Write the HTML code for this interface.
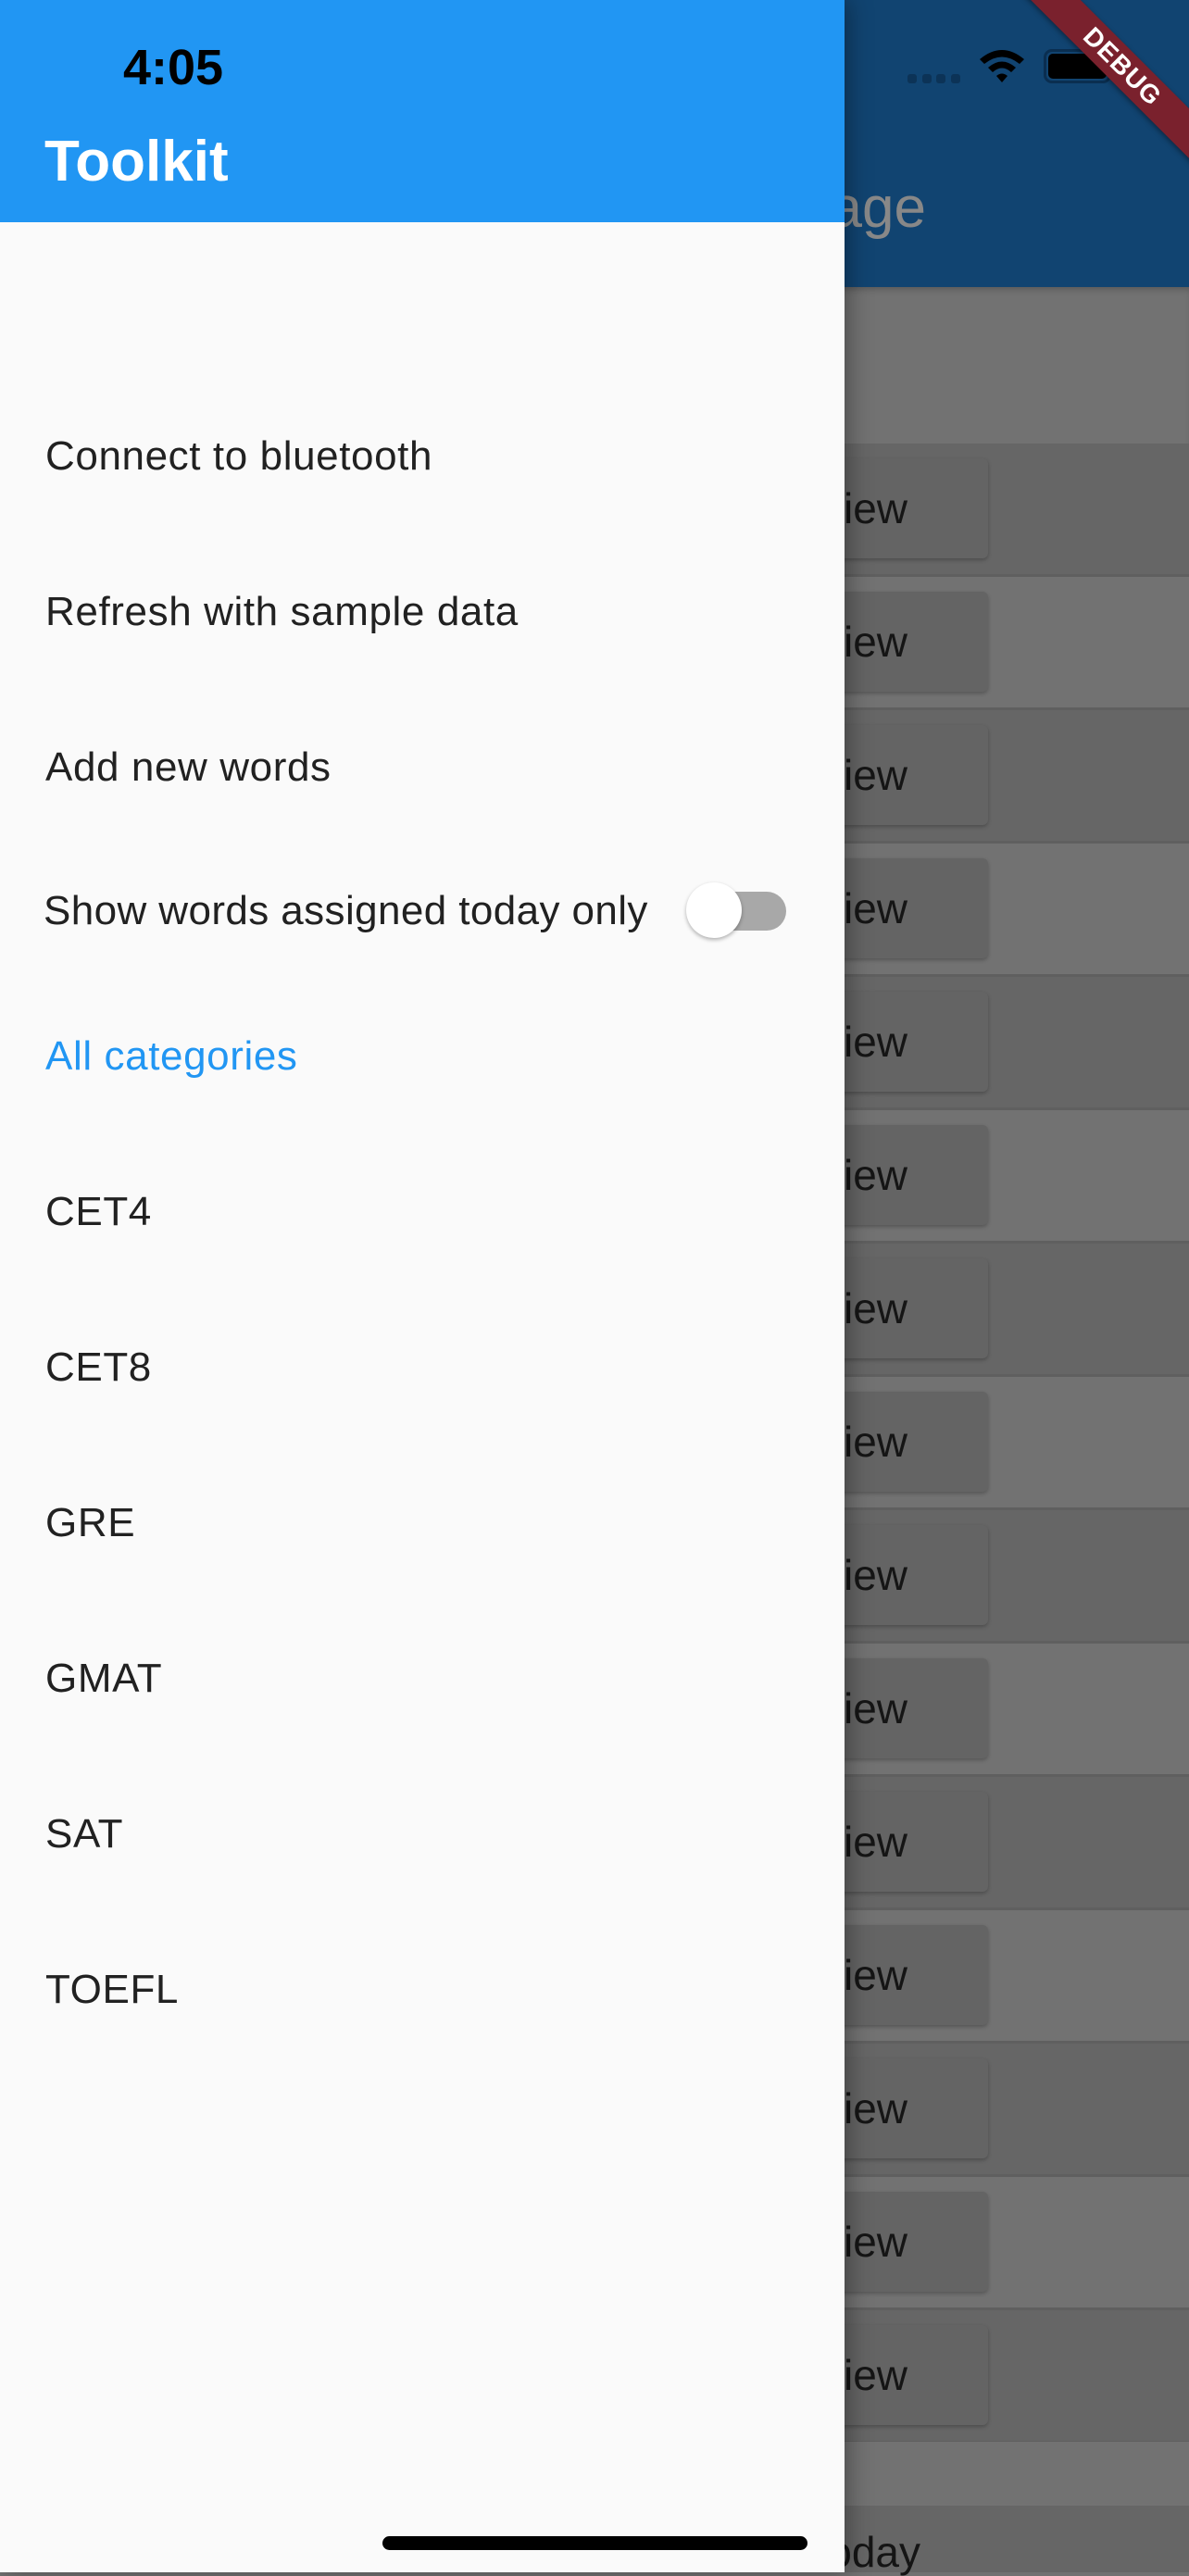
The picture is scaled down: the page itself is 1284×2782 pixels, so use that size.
<!DOCTYPE html>
<html><head><meta charset="utf-8"><style>
*{margin:0;padding:0;box-sizing:border-box}
body{width:1284px;height:2778px;overflow:hidden;position:relative;background:#727272;font-family:"Liberation Sans",sans-serif}
.a{position:absolute;white-space:nowrap}
.row{position:absolute;left:0;width:1284px;height:144px;border-bottom:3px solid #5f5f5f}
.btn{position:absolute;left:860px;width:207px;top:16px;height:108px;background:#646464;border-radius:6px;box-shadow:0 2px 4px rgba(0,0,0,.25)}
.iew{position:absolute;right:304px;top:43px;font-size:46px;color:#151515;line-height:1.2}
.mi{position:absolute;left:49px;font-size:44px;color:#212121;line-height:1;letter-spacing:.6px}
</style></head><body>
<div class="a" style="left:0;top:0;width:1284px;height:310px;background:#114471"></div>
<div class="a" style="left:0;top:310px;width:1284px;height:169px;background:#727272;box-shadow:inset 0 6px 8px -4px rgba(0,0,0,.25)"></div>
<div class="a" style="right:284px;top:194px;font-size:62px;color:#888;line-height:1">Home page</div>

<div class="row" style="top:479px;background:#666"><div class="btn"></div><div class="iew">Review</div></div>
<div class="row" style="top:623px;background:#727272"><div class="btn"></div><div class="iew">Review</div></div>
<div class="row" style="top:767px;background:#666"><div class="btn"></div><div class="iew">Review</div></div>
<div class="row" style="top:911px;background:#727272"><div class="btn"></div><div class="iew">Review</div></div>
<div class="row" style="top:1055px;background:#666"><div class="btn"></div><div class="iew">Review</div></div>
<div class="row" style="top:1199px;background:#727272"><div class="btn"></div><div class="iew">Review</div></div>
<div class="row" style="top:1343px;background:#666"><div class="btn"></div><div class="iew">Review</div></div>
<div class="row" style="top:1487px;background:#727272"><div class="btn"></div><div class="iew">Review</div></div>
<div class="row" style="top:1631px;background:#666"><div class="btn"></div><div class="iew">Review</div></div>
<div class="row" style="top:1775px;background:#727272"><div class="btn"></div><div class="iew">Review</div></div>
<div class="row" style="top:1919px;background:#666"><div class="btn"></div><div class="iew">Review</div></div>
<div class="row" style="top:2063px;background:#727272"><div class="btn"></div><div class="iew">Review</div></div>
<div class="row" style="top:2207px;background:#666"><div class="btn"></div><div class="iew">Review</div></div>
<div class="row" style="top:2351px;background:#727272"><div class="btn"></div><div class="iew">Review</div></div>
<div class="row" style="top:2495px;background:#666"><div class="btn"></div><div class="iew">Review</div></div>
<div class="a" style="left:0;top:2637px;width:1284px;height:69px;background:#727272"></div>
<div class="a" style="left:0;top:2706px;width:1284px;height:72px;background:#666"></div>
<div class="a" style="right:290px;top:2733px;font-size:46px;color:#151515;line-height:1">Words today</div>

<div class="a" style="left:980px;top:80px;width:10px;height:10px;border-radius:3px;background:#0c3357"></div>
<div class="a" style="left:996px;top:80px;width:10px;height:10px;border-radius:3px;background:#0c3357"></div>
<div class="a" style="left:1011px;top:80px;width:10px;height:10px;border-radius:3px;background:#0c3357"></div>
<div class="a" style="left:1027px;top:80px;width:10px;height:10px;border-radius:3px;background:#0c3357"></div>
<svg class="a" style="left:1056px;top:52px" width="52" height="40" viewBox="0 0 52 40">
<path d="M2 12 Q26 -8 50 12 L45 17 Q26 2 7 17Z" fill="#000"/>
<path d="M11 21 Q26 8 41 21 L36 26 Q26 17 16 26Z" fill="#000"/>
<path d="M20 30 Q26 25 32 30 L26 37Z" fill="#000"/>
</svg>
<div class="a" style="left:1127px;top:53px;width:73px;height:37px;border:3px solid #0a2e50;border-radius:9px"></div>
<div class="a" style="left:1132px;top:58px;width:63px;height:27px;background:#000;border-radius:5px"></div>
<div class="a" style="left:1062px;top:53px;width:300px;height:38px;background:#7a212d;transform:rotate(45deg);box-shadow:0 2px 6px rgba(0,0,0,.4);color:#fff;font-weight:bold;font-size:28px;text-align:center;line-height:38px;letter-spacing:1px">DEBUG</div>

<div class="a" style="left:0;top:0;width:912px;height:2778px;background:#fafafa;box-shadow:4px 0 24px rgba(0,0,0,.35)"></div>
<div class="a" style="left:0;top:0;width:912px;height:240px;background:#2196f3"></div>
<div class="a" style="left:133px;top:46px;font-size:54px;font-weight:bold;color:#000;line-height:1">4:05</div>
<div class="a" style="left:48px;top:144px;font-size:62px;font-weight:bold;color:#fff;line-height:1">Toolkit</div>

<div class="mi" style="top:471px">Connect to bluetooth</div>
<div class="mi" style="top:639px">Refresh with sample data</div>
<div class="mi" style="top:807px">Add new words</div>
<div class="mi" style="top:962px;left:47px;letter-spacing:.4px">Show words assigned today only</div>
<div class="mi" style="top:1119px;color:#2196f3">All categories</div>
<div class="mi" style="top:1287px">CET4</div>
<div class="mi" style="top:1455px">CET8</div>
<div class="mi" style="top:1623px">GRE</div>
<div class="mi" style="top:1791px">GMAT</div>
<div class="mi" style="top:1959px">SAT</div>
<div class="mi" style="top:2127px">TOEFL</div>

<div class="a" style="left:760px;top:963px;width:89px;height:42px;border-radius:21px;background:#a8a8a8"></div>
<div class="a" style="left:741px;top:953px;width:60px;height:60px;border-radius:50%;background:#fff;box-shadow:0 2px 4px rgba(0,0,0,.3)"></div>

<div class="a" style="left:413px;top:2739px;width:459px;height:15px;border-radius:8px;background:#000"></div>
</body></html>
